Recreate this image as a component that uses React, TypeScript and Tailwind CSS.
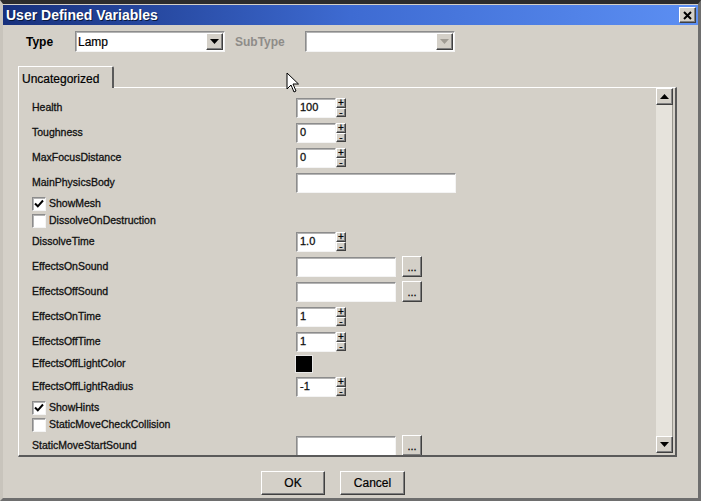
import React from 'react';

// classic 3D borders
const raised =
  'border border-t-white border-l-white border-r-[#404040] border-b-[#404040] shadow-[inset_-1px_-1px_0_#808080]';
const sunken =
  'border border-t-[#8c8c8c] border-l-[#8c8c8c] border-r-[#f4f4f4] border-b-[#f4f4f4] shadow-[inset_1px_1px_0_#b4b4b4]';

type Row =
  | { kind: 'num'; label: string; value: string }
  | { kind: 'text'; label: string }
  | { kind: 'file'; label: string }
  | { kind: 'check'; label: string; checked: boolean }
  | { kind: 'color'; label: string };

const rows: Row[] = [
  { kind: 'num', label: 'Health', value: '100' },
  { kind: 'num', label: 'Toughness', value: '0' },
  { kind: 'num', label: 'MaxFocusDistance', value: '0' },
  { kind: 'text', label: 'MainPhysicsBody' },
  { kind: 'check', label: 'ShowMesh', checked: true },
  { kind: 'check', label: 'DissolveOnDestruction', checked: false },
  { kind: 'num', label: 'DissolveTime', value: '1.0' },
  { kind: 'file', label: 'EffectsOnSound' },
  { kind: 'file', label: 'EffectsOffSound' },
  { kind: 'num', label: 'EffectsOnTime', value: '1' },
  { kind: 'num', label: 'EffectsOffTime', value: '1' },
  { kind: 'color', label: 'EffectsOffLightColor' },
  { kind: 'num', label: 'EffectsOffLightRadius', value: '-1' },
  { kind: 'check', label: 'ShowHints', checked: true },
  { kind: 'check', label: 'StaticMoveCheckCollision', checked: false },
  { kind: 'file', label: 'StaticMoveStartSound' },
];

const Arrow = ({ up = false, color = '#000' }: { up?: boolean; color?: string }) => (
  <svg width="9" height="5" viewBox="0 0 9 5">
    {up ? <path d="M4.5 0 L9 5 L0 5 Z" fill={color} /> : <path d="M0 0 L9 0 L4.5 5 Z" fill={color} />}
  </svg>
);

const Spinner = () => (
  <div className="flex flex-col w-[10px] h-[19px]">
    <div className={`${raised} bg-[#d4d0c8] h-[10px] flex items-center justify-center text-[10px] leading-none text-black`}>+</div>
    <div className={`${raised} bg-[#d4d0c8] h-[9px] flex items-center justify-center text-[10px] leading-none text-black`}>-</div>
  </div>
);

const Field = ({ row }: { row: Row }) => {
  if (row.kind === 'check') {
    return (
      <div className="h-[17px] flex items-center gap-[3px]">
        <div className={`${sunken} bg-white w-[14px] h-[14px] flex items-center justify-center`}>
          {row.checked && (
            <svg width="10" height="9" viewBox="0 0 10 9">
              <path d="M1 4.5 L3.8 7.3 L9 1.5" stroke="#000" strokeWidth="2" fill="none" />
            </svg>
          )}
        </div>
        <span>{row.label}</span>
      </div>
    );
  }
  return (
    <div className={`flex items-center ${row.kind === 'color' ? 'h-[20px]' : 'h-[25px]'}`}>
      <div className="w-[264px]">{row.label}</div>
      {row.kind === 'num' && (
        <div className="flex items-center">
          <div className={`${sunken} bg-white w-[40px] h-[20px] flex items-center pl-[3px] text-[11px]`}>{row.value}</div>
          <Spinner />
        </div>
      )}
      {row.kind === 'text' && <div className={`${sunken} bg-white w-[160px] h-[20px]`} />}
      {row.kind === 'file' && (
        <div className="flex items-center gap-[6px]">
          <div className={`${sunken} bg-white w-[100px] h-[20px]`} />
          <div className={`${raised} bg-[#d4d0c8] w-[20px] h-[21px] flex items-end justify-center pb-[3px] text-[11px] leading-none`}>...</div>
        </div>
      )}
      {row.kind === 'color' && <div className="-ml-[1px] w-[18px] h-[18px] bg-black border border-[#e8e8e8]" />}
    </div>
  );
};

export default function App() {
  return (
    <div
      className="relative w-[701px] h-[501px] bg-[#d4d0c8] flex flex-col border-t-[4px] border-t-[#2c2c2c] border-l-[3px] border-l-[#c8c4bc] border-r-[3px] border-r-[#6e6e6e] border-b-[3px] border-b-[#6e6e6e] text-black"
      style={{ fontFamily: '"Liberation Sans", Arial, sans-serif' }}
    >
      {/* title bar */}
      <div className="mt-[1px] h-[20px] flex items-center justify-between bg-gradient-to-r from-[#17307c] via-[#3e6bd2] to-[#5c8ff3] pl-[3px] pr-[2px]">
        <span className="text-white font-bold text-[14px] [text-shadow:1px_1px_0_#0a1a40]">User Defined Variables</span>
        <div className={`${raised} bg-[#d4d0c8] w-[17px] h-[16px] flex items-center justify-center`}>
          <svg width="9" height="9" viewBox="0 0 9 9">
            <path d="M1 1 L8 8 M8 1 L1 8" stroke="#000" strokeWidth="2" />
          </svg>
        </div>
      </div>

      {/* type row */}
      <div className="mt-[6px] h-[21px] flex items-center pl-[23px]">
        <span className="w-[49px] font-bold text-[12px]">Type</span>
        <div className={`${sunken} bg-white w-[150px] h-[21px] flex items-center justify-between pl-[2px] pr-[1px]`}>
          <span className="text-[12px] [-webkit-text-stroke:0.2px_#000]">Lamp</span>
          <div className={`${raised} bg-[#d4d0c8] w-[17px] h-[17px] flex items-center justify-center`}>
            <Arrow />
          </div>
        </div>
        <span className="ml-[10px] w-[70px] font-bold text-[12px] text-[#8e8c88]">SubType</span>
        <div className={`${sunken} bg-white w-[150px] h-[21px] flex items-center justify-end pr-[1px]`}>
          <div className={`${raised} bg-[#d4d0c8] w-[17px] h-[17px] flex items-center justify-center`}>
            <Arrow color="#a09c94" />
          </div>
        </div>
      </div>

      {/* tab */}
      <div className="mt-[14px] pl-[15px] h-[21px] flex">
        <div className="w-[96px] h-[22px] bg-[#d4d0c8] border-t border-l border-t-white border-l-white border-r-2 border-r-[#5a5a5a] rounded-tr-[2px] pl-[3px] pt-[3px] text-[12px] [-webkit-text-stroke:0.2px_#000] relative z-10">
          Uncategorized
        </div>
      </div>

      {/* panel */}
      <div className="ml-[15px] w-[659px] h-[370px] border-t border-l border-t-white border-l-white border-r-2 border-b-2 border-r-[#5a5a5a] border-b-[#5a5a5a] flex">
        <div className="flex-1 overflow-hidden pl-[13px] pt-[7px] text-[10.5px] text-[#111] [-webkit-text-stroke:0.3px_#111]">
          {rows.map((r) => (
            <Field key={r.label} row={r} />
          ))}
        </div>
        <div className="w-[17px] mr-[2px] flex flex-col pb-[2px]">
          <div className={`${raised} bg-[#d4d0c8] h-[17px] flex items-center justify-center`}>
            <Arrow up />
          </div>
          <div className="flex-1 bg-[#e6e3dc] border-r border-r-[#9a9890]" />
          <div className={`${raised} bg-[#d4d0c8] h-[17px] flex items-center justify-center`}>
            <Arrow />
          </div>
        </div>
      </div>

      {/* buttons */}
      <div className="mt-[14px] flex gap-[15px] pl-[258px]">
        <div className={`${raised} bg-[#d4d0c8] w-[64px] h-[24px] flex items-center justify-center text-[12px] [-webkit-text-stroke:0.2px_#000]`}>OK</div>
        <div className={`${raised} bg-[#d4d0c8] w-[65px] h-[24px] flex items-center justify-center text-[12px] [-webkit-text-stroke:0.2px_#000]`}>Cancel</div>
      </div>

      {/* mouse pointer */}
      <svg className="absolute left-[283px] top-[68px]" width="14" height="22" viewBox="0 0 14 22">
        <path d="M1 1 L1 17 L5 13 L8 20 L10 19 L7 12 L12.5 12 Z" fill="#fff" stroke="#000" strokeWidth="1" />
      </svg>
    </div>
  );
}
